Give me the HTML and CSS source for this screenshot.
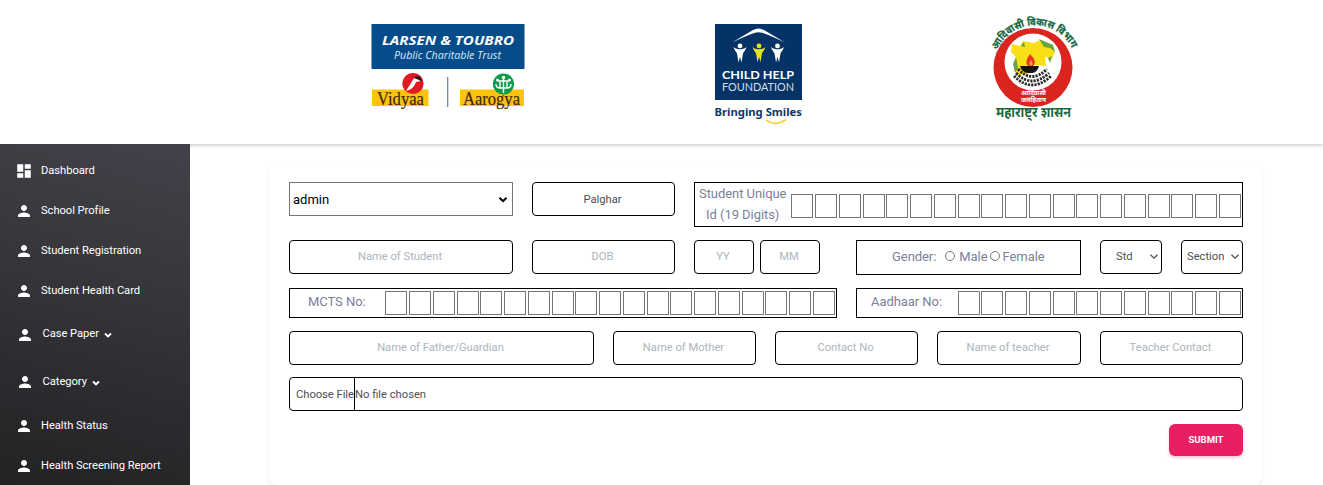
FILE: index.html
```
<!DOCTYPE html>
<html lang="en">
<head>
<meta charset="utf-8">
<title>Student Registration</title>
<link rel="stylesheet" href="styles.css">
</head>
<body>
<svg class="defs" aria-hidden="true">
  <symbol id="person" viewBox="0 0 24 24"><path d="M12 12c2.21 0 4-1.79 4-4s-1.79-4-4-4-4 1.79-4 4 1.790 4 4 4zm0 2c-2.670 0-8 1.340-8 4v2h16v-2c0-2.660-5.330-4-8-4z"/></symbol>
  <symbol id="dash" viewBox="0 0 24 24"><path d="M3 13h8V3H3v10zm0 8h8v-6H3v6zm10 0h8V11h-8v10zm0-18v6h8V3h-8z"/></symbol>
  <symbol id="chev" viewBox="0 0 8 6"><path d="M1 1.500L4 4.400L7 1.500"/></symbol>
  <symbol id="figure" viewBox="0 0 14 20"><circle cx="7" cy="3" r="2.500"/><path d="M0.300 4C2.500 6 5 6.300 7 6.300S11.500 6 13.700 4C12.500 8 10.500 9 10 11L8.500 20L7 14L5.500 20L4 11C3.500 9 1.500 8 .300 4z"/></symbol>
</svg>
<header class="header">
  <svg class="logo-lt" width="155" height="90" viewBox="371 22 155 90">
    <rect x="371.500" y="24" width="153" height="45" fill="#064c8b"/>
    <text x="382" y="45" class="lt-title" textLength="132" lengthAdjust="spacingAndGlyphs">LARSEN &amp; TOUBRO</text>
    <text x="394" y="59" class="lt-sub" textLength="107" lengthAdjust="spacingAndGlyphs">Public Charitable Trust</text>
    <rect x="372" y="89.500" width="56.500" height="16.500" fill="#fdc20c"/>
    <rect x="460" y="89.500" width="64" height="16.500" fill="#fdc20c"/>
    <circle cx="413" cy="83.500" r="10.600" fill="#e01922"/>
    <path d="M406 91L411 83Q414 76 419 77L421 81L416 82Q414 89 406 91z" fill="#fff"/>
    <path d="M414 78Q418 74 421 78L422 82L419 80z" fill="#2b1717"/>
    <circle cx="503.500" cy="84" r="10.600" fill="#079b4b"/>
    <g fill="none" stroke="#fff" stroke-width="1.400"><path d="M503.500 79V93M498 81H509M496 84Q496 88 500 88H507Q511 88 511 84M500 82V88M507 82V88"/></g>
    <g fill="#fff"><circle cx="503.500" cy="77.500" r="1.700"/><circle cx="497.500" cy="80" r="1.500"/><circle cx="509.500" cy="80" r="1.500"/></g>
    <text x="377" y="105" class="lt-name" textLength="47" lengthAdjust="spacingAndGlyphs">Vidyaa</text>
    <text x="463" y="105" class="lt-name" textLength="57" lengthAdjust="spacingAndGlyphs">Aarogya</text>
    <path d="M447.700 77V107" stroke="#5a7da5" stroke-width="1.200"/>
  </svg>
  <svg class="logo-chf" width="90" height="104" viewBox="713 22 90 104">
    <rect x="715" y="24" width="87" height="76" fill="#053366"/>
    <path d="M732 42.500L753 30Q758.500 27 764 30L785 42.500Q770 35.500 762 32.800Q758.500 31.800 755 32.800Q747 35.500 732 42.500z" fill="#fff"/>
    <use href="#figure" x="733" y="43" width="14" height="19.500" fill="#fff"/>
    <use href="#figure" x="752" y="43" width="14" height="19.500" fill="#e4e222"/>
    <use href="#figure" x="770.500" y="43" width="14" height="19.500" fill="#fff"/>
    <text x="722" y="79" class="chf-title" textLength="72" lengthAdjust="spacingAndGlyphs">CHILD HELP</text>
    <text x="722" y="90.500" class="chf-sub" textLength="72" lengthAdjust="spacingAndGlyphs">FOUNDATION</text>
    <text x="714.500" y="116" class="chf-tag" textLength="87.500" lengthAdjust="spacingAndGlyphs">Bringing Smiles</text>
    <path d="M766 120Q776 127 786 119.500" fill="none" stroke="#f3d62c" stroke-width="1.600"/>
  </svg>
  <svg class="logo-gov" width="90" height="108" viewBox="989 14 90 108" lang="mr">
    <circle cx="1033" cy="67.500" r="39.500" fill="#dc241f"/>
    <circle cx="1033" cy="62" r="28.500" fill="#fff"/>
    <path d="M1012 44L1020 46L1023 41L1034 43L1040 40L1052 45L1055 52L1052 59L1045 57L1046 66L1034 65L1030 73L1017 76L1014 65L1016 57L1011 52z" fill="#f8df18"/>
    <path d="M1039 39L1053 45L1055 52L1050 48L1044 47zM1016 57L1018 68L1015 73L1013 64zM1021 46L1024 42L1025 47zM1048 58L1052 56L1050 63z" fill="#69a53d"/>
    <g fill="none" stroke="#29272a" stroke-width="2.800" stroke-dasharray="2.200 1.100"><path d="M1016 73Q1032 89 1049 73"/><path d="M1018 69Q1032 84 1047 69"/><path d="M1014 76Q1032 94 1051 76"/></g>
    <path d="M1020 66H1039Q1037 73 1032 73H1028Q1022 73 1020 66z" fill="#171216"/>
    <path d="M1030 54Q1038 62 1033 66H1028Q1024 62 1030 54z" fill="#e73820"/>
    <path d="M1031 60Q1034 64 1031 66Q1028 64 1031 60z" fill="#ffad20"/>
    <path id="arc" d="M997 51A41 41 0 0 1 1073 51" fill="none"/>
    <text class="gov-arc"><textPath href="#arc" startOffset="1" textLength="93" lengthAdjust="spacingAndGlyphs">आदिवासी विकास विभाग</textPath></text>
    <text x="1021" y="95" class="gov-in" textLength="25" lengthAdjust="spacingAndGlyphs">आदिवासी</text>
    <text x="1021" y="102" class="gov-in" textLength="25" lengthAdjust="spacingAndGlyphs">जलहिताय</text>
    <text x="996" y="117" class="gov-name" textLength="75" lengthAdjust="spacingAndGlyphs">महाराष्ट्र शासन</text>
  </svg>
</header>
<div class="layout">
  <nav class="sidebar">
    <a class="item"><svg class="ico"><use href="#dash"/></svg>Dashboard</a>
    <a class="item"><svg class="ico"><use href="#person"/></svg>School Profile</a>
    <a class="item"><svg class="ico"><use href="#person"/></svg>Student Registration</a>
    <a class="item"><svg class="ico"><use href="#person"/></svg>Student Health Card</a>
    <a class="item group first"><svg class="ico"><use href="#person"/></svg>Case Paper<svg class="caret"><use href="#chev"/></svg></a>
    <a class="item group"><svg class="ico"><use href="#person"/></svg>Category<svg class="caret"><use href="#chev"/></svg></a>
    <a class="item"><svg class="ico"><use href="#person"/></svg>Health Status</a>
    <a class="item"><svg class="ico"><use href="#person"/></svg>Health Screening Report</a>
  </nav>
  <main class="main">
    <form class="card">
      <div class="row row-id">
        <div class="select-plain w-name"><span>admin</span><svg class="arrow bold"><use href="#chev"/></svg></div>
        <div class="field w-col value">Palghar</div>
        <div class="digits unique"><label class="label two-line">Student Unique<br>Id (19 Digits)</label>
          <div class="cells"><i></i><i></i><i></i><i></i><i></i><i></i><i></i><i></i><i></i><i></i><i></i><i></i><i></i><i></i><i></i><i></i><i></i><i></i><i></i></div></div>
      </div>
      <div class="row row-student">
        <div class="field w-name">Name of Student</div>
        <div class="field w-col">DOB</div>
        <div class="age"><div class="field w-age">YY</div><div class="field w-age">MM</div></div>
        <div class="gender"><span class="gender-label">Gender:</span><b class="radio"></b><span>Male</span><b class="radio second"></b><span>Female</span></div>
        <div class="field w-select value std"><span>Std</span><svg class="arrow"><use href="#chev"/></svg></div>
        <div class="field w-select value section"><span>Section</span><svg class="arrow"><use href="#chev"/></svg></div>
      </div>
      <div class="row row-numbers">
        <div class="digits mcts"><label class="label">MCTS No:</label>
          <div class="cells"><i></i><i></i><i></i><i></i><i></i><i></i><i></i><i></i><i></i><i></i><i></i><i></i><i></i><i></i><i></i><i></i><i></i><i></i><i></i></div></div>
        <div class="digits aadhaar"><label class="label">Aadhaar No:</label>
          <div class="cells"><i></i><i></i><i></i><i></i><i></i><i></i><i></i><i></i><i></i><i></i><i></i><i></i></div></div>
      </div>
      <div class="row row-contacts">
        <div class="field w-father">Name of Father/Guardian</div>
        <div class="field w-col">Name of Mother</div>
        <div class="field w-col">Contact No</div>
        <div class="field w-teacher">Name of teacher</div>
        <div class="field w-col">Teacher Contact</div>
      </div>
      <div class="file"><span class="choose">Choose File</span><span>No file chosen</span></div>
      <div class="actions"><button type="button" class="submit">SUBMIT</button></div>
    </form>
  </main>
</div>
</body>
</html>
```
FILE: styles.css
```
* { box-sizing: border-box; }
body { margin: 0; height: 485px; overflow: hidden; background: #fff; font-family: Roboto, "Noto Sans", sans-serif; }
.defs { display: none; }

.header { height: 144px; display: flex; align-items: flex-start; padding-left: 371px; background: #fff; box-shadow: 0 1px 4px rgba(0,0,0,.25); }
.logo-lt { margin-top: 22px; }
.logo-chf { margin: 22px 0 0 187px; }
.logo-gov { margin: 14px 0 0 186px; overflow: visible; }
.lt-title { font: italic 700 13px "Open Sans", sans-serif; fill: #fff; }
.lt-sub { font: italic 400 10.500px "Open Sans", sans-serif; fill: #dce9f5; }
.lt-name { font: 400 18px "Liberation Serif", serif; fill: #3a2b10; stroke: #3a2b10; stroke-width: .2px; }
.chf-title { font: 700 12px Lato, sans-serif; fill: #fff; }
.chf-sub { font: 400 11px Lato, sans-serif; fill: #d4deea; }
.chf-tag { font: 700 11px "Noto Sans", sans-serif; fill: #123668; }
.gov-arc { font: 700 10.500px "Noto Sans Devanagari", "Noto Sans", sans-serif; fill: #17673f; stroke: #17673f; stroke-width: .25px; }
.gov-in { font: 700 7px "Noto Sans Devanagari", "Noto Sans", sans-serif; fill: #fff; }
.gov-name { font: 700 14px "Noto Sans Devanagari", "Noto Sans", sans-serif; fill: #17673f; }

.layout { display: flex; height: 341px; }
.sidebar { position: relative; width: 190px; padding-top: 6px; background: linear-gradient(195deg, #42424a, #191919 130%); display: flex; flex-direction: column; }
.item { display: flex; align-items: center; height: 40px; padding-left: 15px; color: #fff; font-size: 11.200px; letter-spacing: -.05px; flex: none; }
.group { height: 48px; padding-left: 16px; }
.first { height: 47px; }
.ico { width: 18px; height: 18px; margin: 2px 8px 0 0; fill: #fff; }
.group .ico { margin-right: 8.500px; }
.caret { width: 8px; height: 6px; margin: 3px 0 0 5px; fill: none; stroke: #fff; stroke-width: 2; }

.main { flex: 1; padding: 19px 61px 0 79px; }
.card { width: 993px; height: 324px; padding: 19px 19px 0 20px; border-radius: 12px; box-shadow: 0 2px 4px rgba(0,0,0,.07); display: flex; flex-direction: column; }
.row { display: flex; gap: 19px; align-items: flex-start; }
.row-id { height: 58px; }
.row-student { height: 48px; }
.row-numbers { height: 43px; }
.row-contacts { height: 46px; }
.field { height: 34px; border: 1px solid #000; border-radius: 4px; display: flex; align-items: center; justify-content: center; font-size: 11.200px; color: #adb5bd; flex: none; padding: 0 2px 2px 0; }
.value { color: #495057; padding-bottom: 0; }
.w-name { width: 224px; }
.w-col { width: 143px; }
.w-age { width: 60px; }
.w-select { width: 62px; }
.w-father { width: 305px; }
.w-teacher { width: 144px; }
.age { display: flex; gap: 6px; margin-right: 17px; }
.select-plain { height: 34px; border: 1px solid #767676; display: flex; align-items: center; justify-content: space-between; padding: 0 4px 0 3px; font-size: 13px; color: #000; }
.arrow { width: 10px; height: 7px; fill: none; stroke: #495057; stroke-width: 1.100; flex: none; }
.arrow.bold { stroke: #000; stroke-width: 1.800; }
.std { justify-content: space-between; padding: 0 2px 2px 15px; }
.section { justify-content: space-between; padding: 0 2px 2px 5px; }

.digits { border: 1px solid #000; display: flex; align-items: center; justify-content: space-between; padding-right: 1px; color: #7b809a; font-size: 13px; letter-spacing: -.06px; }
.label { text-align: center; }
.two-line { line-height: 21px; margin-top: -1px; }
.unique { width: 549px; height: 45px; padding-left: 4px; }
.unique .cells { margin-top: 3px; }
.mcts { width: 548px; height: 30px; padding-left: 18px; }
.aadhaar { width: 387px; height: 30px; padding-left: 14px; }
.mcts .label, .aadhaar .label { margin-top: -3px; }
.cells { display: flex; gap: 1.780px; }
.cells i { width: 22px; height: 24px; border: 1px solid #767676; }

.gender { width: 225px; height: 35px; border: 1px solid #000; display: flex; align-items: center; padding: 0 0 3px 35px; color: #7b809a; font-size: 13px; letter-spacing: -.06px; }
.gender-label { margin-right: 9px; }
.radio { width: 10px; height: 10px; border: 1px solid #767676; border-radius: 50%; margin-right: 4px; }
.second { margin: 0 3px 0 2px; }

.file { height: 34px; border: 1px solid #000; border-radius: 4px; display: flex; font-size: 11.200px; line-height: 33px; color: #495057; }
.choose { width: 65px; padding-left: 6px; border-right: 1px solid #000; white-space: nowrap; letter-spacing: -.03px; }
.actions { display: flex; justify-content: flex-end; margin-top: 13px; }
.submit { width: 74px; height: 32px; border: 0; border-radius: 6px; background: #e91e63; color: #fff; font: 700 9.500px Roboto, sans-serif; padding: 0 0 1px; box-shadow: 0 2px 3px rgba(233,30,99,.25); }
```
